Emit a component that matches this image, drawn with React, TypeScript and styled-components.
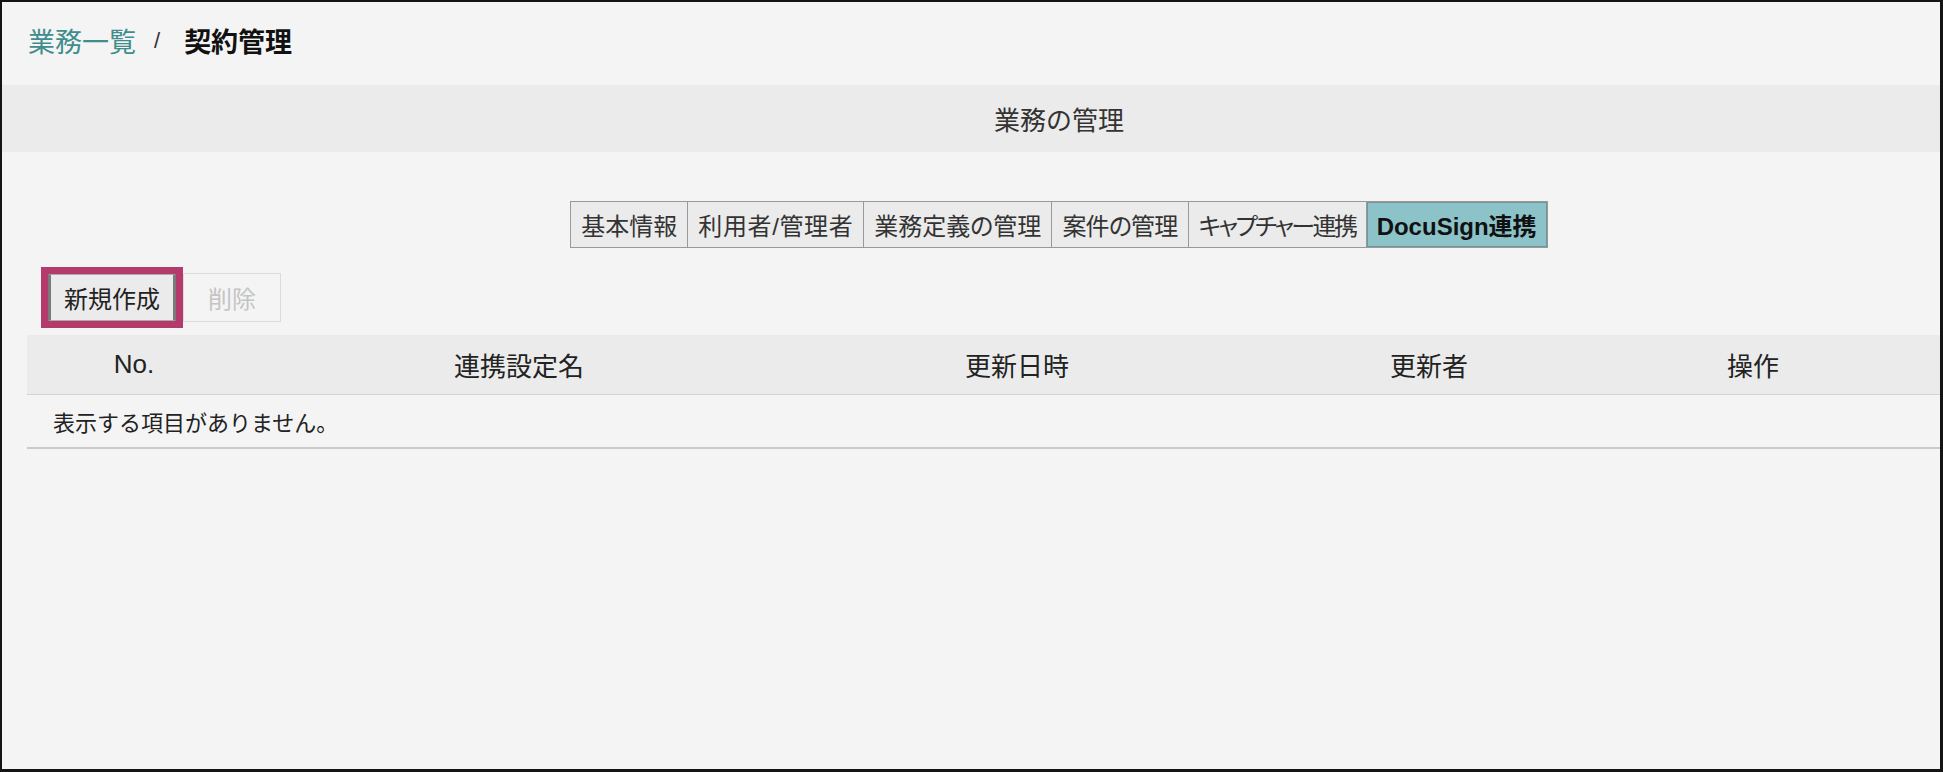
import styled, { createGlobalStyle } from 'styled-components';

const GlobalStyle = createGlobalStyle`
  html, body {
    margin: 0;
    padding: 0;
    background: #f4f4f4;
  }
  body {
    font-family: "Liberation Sans", "Noto Sans CJK JP", sans-serif;
    color: #222;
  }
`;

const tabs = [
  { label: '基本情報', spacing: 0 },
  { label: '利用者/管理者', spacing: 0.6 },
  { label: '業務定義の管理', spacing: 0 },
  { label: '案件の管理', spacing: -0.8 },
  { label: 'キャプチャー連携', spacing: -2.5 },
  { label: 'DocuSign連携', spacing: 0 },
];
const activeTab = 'DocuSign連携';

const columns = [
  { key: 'no', label: 'No.' },
  { key: 'name', label: '連携設定名' },
  { key: 'updatedAt', label: '更新日時' },
  { key: 'updatedBy', label: '更新者' },
  { key: 'action', label: '操作' },
];

const App = () => {
  return (
    <>
      <GlobalStyle />
      <Frame>
        <Page>
          <Breadcrumb>
            <CrumbLink>業務一覧</CrumbLink>
            <CrumbSep>/</CrumbSep>
            <CrumbCurrent>契約管理</CrumbCurrent>
          </Breadcrumb>

          <SectionBand>業務の管理</SectionBand>

          <TabBar>
            <TabGroup>
              {tabs.map((t) => (
                <Tab key={t.label} $active={t.label === activeTab} $spacing={t.spacing}>
                  {t.label}
                </Tab>
              ))}
            </TabGroup>
          </TabBar>

          <Toolbar>
            <Highlight>
              <NewButton>新規作成</NewButton>
            </Highlight>
            <DeleteButton disabled>削除</DeleteButton>
          </Toolbar>

          <Table>
            <HeaderRow>
              {columns.map((c) => (
                <HeaderCell key={c.key}>{c.label}</HeaderCell>
              ))}
              <HeaderCell />
            </HeaderRow>
            <EmptyRow>表示する項目がありません。</EmptyRow>
          </Table>
        </Page>
      </Frame>
    </>
  );
};

export default App;

const Frame = styled.div`
  box-sizing: border-box;
  height: 100vh;
  border-style: solid;
  border-color: #141414;
  border-width: 2px 3px 3px 2px;
  overflow: hidden;
  background: #f4f4f4;
`;

const Page = styled.div`
  width: 2114px;
`;

const Breadcrumb = styled.div`
  box-sizing: border-box;
  height: 83px;
  display: flex;
  align-items: center;
  padding: 0 0 6px 26px;
  font-size: 27px;
`;

const CrumbLink = styled.span`
  color: #3f8d8c;
`;

const CrumbSep = styled.span`
  color: #333;
  margin: 0 24px 0 18px;
  font-size: 22px;
`;

const CrumbCurrent = styled.span`
  color: #111;
  font-weight: bold;
`;

const SectionBand = styled.div`
  height: 67px;
  display: flex;
  align-items: center;
  justify-content: center;
  background: #ebebeb;
  font-size: 26px;
  color: #333;
`;

const TabBar = styled.div`
  display: flex;
  justify-content: center;
  margin-top: 49px;
`;

const TabGroup = styled.div`
  display: flex;
  border: 1px solid #999;
`;

const Tab = styled.div<{ $active?: boolean; $spacing: number }>`
  height: 45px;
  display: flex;
  align-items: center;
  padding: 0 10px;
  font-size: 24px;
  font-feature-settings: 'palt';
  letter-spacing: ${(p) => p.$spacing}px;
  color: ${(p) => (p.$active ? '#111' : '#333')};
  font-weight: ${(p) => (p.$active ? 'bold' : 'normal')};
  background: ${(p) => (p.$active ? '#8cc3c8' : '#ebebeb')};
  box-shadow: ${(p) => (p.$active ? 'inset 0 0 0 1px #6f979b' : 'none')};

  & + & {
    border-left: 1px solid #999;
  }
`;

const Toolbar = styled.div`
  display: flex;
  align-items: center;
  margin-top: 19px;
  padding-left: 39px;
`;

const Highlight = styled.div`
  display: flex;
  border: 7px solid #b43a6b;
`;

const NewButton = styled.button`
  box-sizing: border-box;
  width: 128px;
  height: 47px;
  padding: 0;
  font-family: inherit;
  font-size: 24px;
  color: #222;
  background: #ebebeb;
  border: 1px solid #aaa;
  border-left: 3px solid #7a7a7a;
  border-right: 3px solid #7a7a7a;
`;

const DeleteButton = styled.button`
  box-sizing: border-box;
  width: 98px;
  height: 49px;
  padding: 0;
  font-family: inherit;
  font-size: 24px;
  color: #c4c4c4;
  background: #f4f4f4;
  border: 1px solid #dcdcdc;
`;

const Table = styled.div`
  margin: 7px 0 0 25px;
`;

const gridCols = '214px 556px 440px 384px 264px 1fr';

const HeaderRow = styled.div`
  display: grid;
  grid-template-columns: ${gridCols};
  height: 59px;
  background: #ebebeb;
  border-bottom: 1px solid #d3d3d3;
`;

const HeaderCell = styled.div`
  display: flex;
  align-items: center;
  justify-content: center;
  font-size: 26px;
  color: #222;
`;

const EmptyRow = styled.div`
  height: 52px;
  display: flex;
  align-items: center;
  padding-left: 26px;
  font-size: 22px;
  color: #222;
  border-bottom: 2px solid #cacaca;
`;
